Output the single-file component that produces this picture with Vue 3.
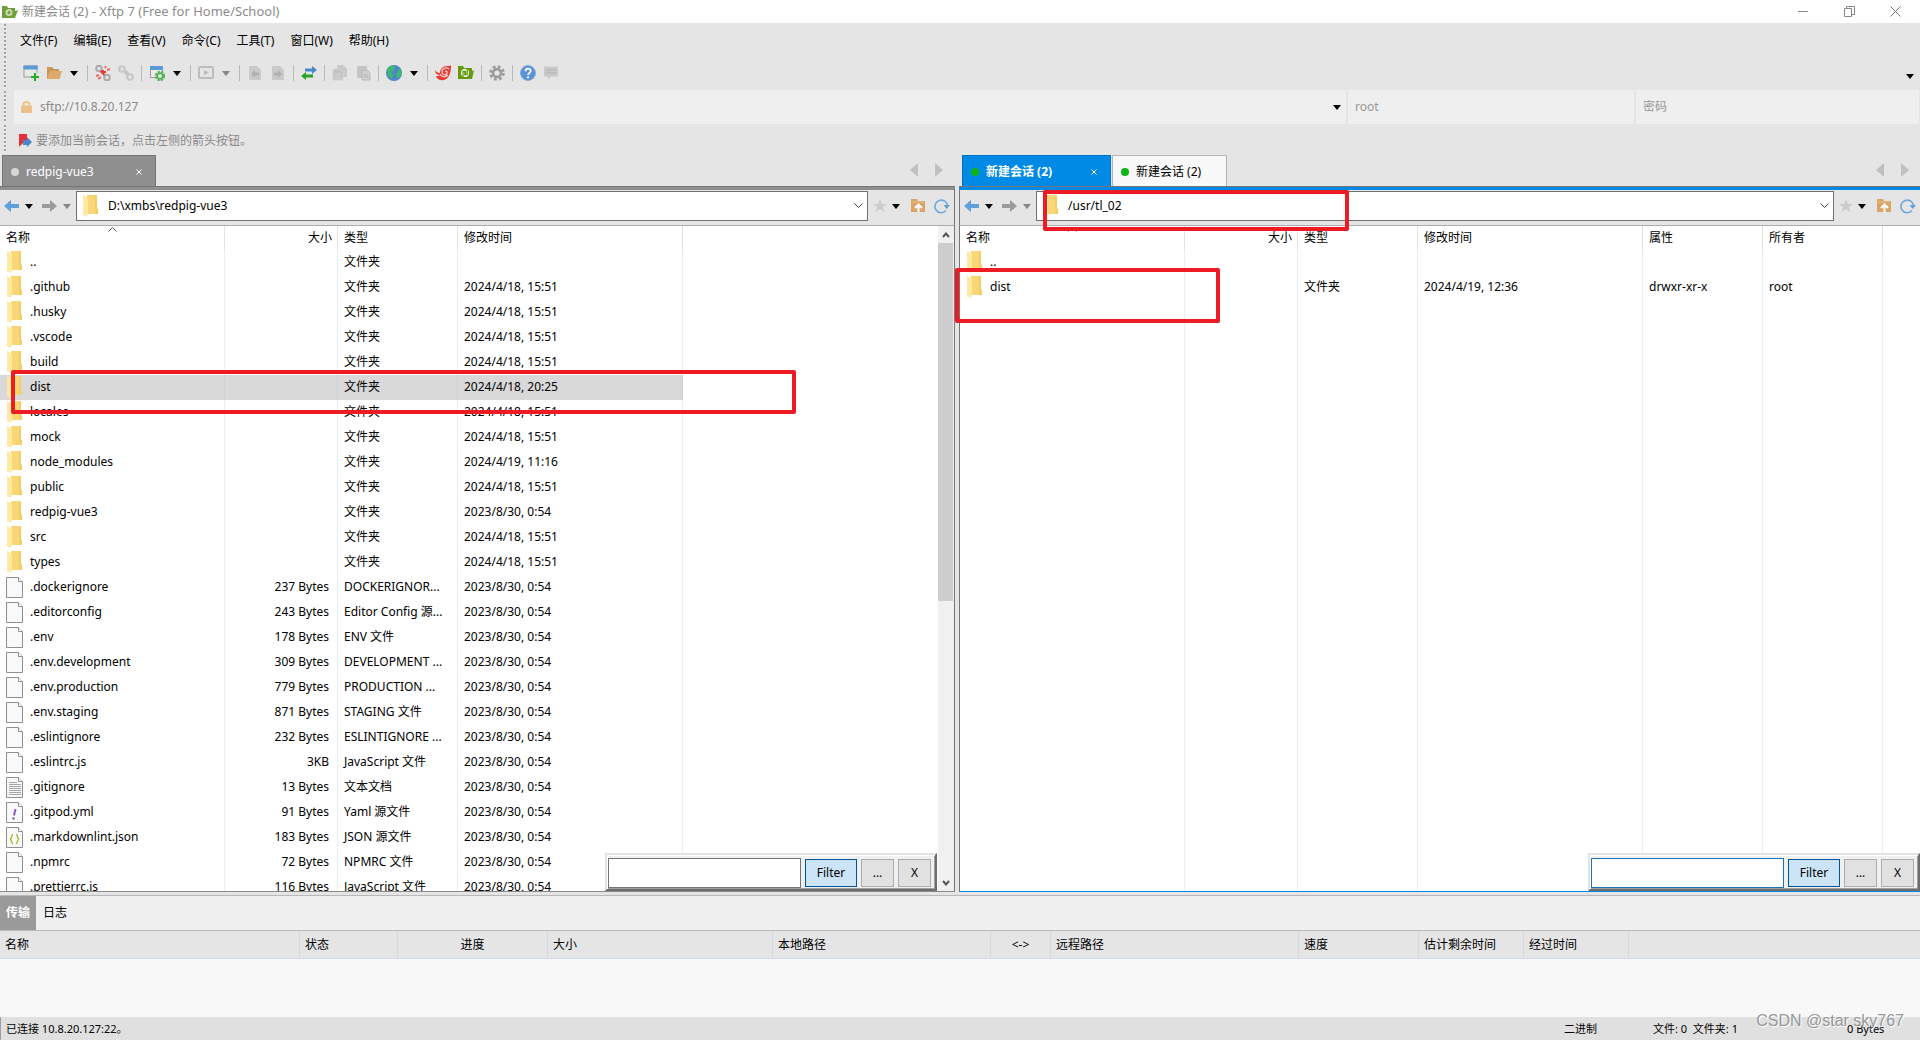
<script setup>
import { ref } from 'vue'

const host = ref('sftp://10.8.20.127')
const localPath = ref('D:\\xmbs\\redpig-vue3')
const remotePath = ref('/usr/tl_02')
const localFilter = ref('')
const remoteFilter = ref('')

const menus = ['文件(F)', '编辑(E)', '查看(V)', '命令(C)', '工具(T)', '窗口(W)', '帮助(H)']

const icons = {
  create: '<rect x="1" y="1" width="13" height="11" fill="#e9e9e9" stroke="#9c9c9c"/><rect x="0.5" y="0.5" width="14" height="4" fill="#5b9bd5"/><path d="M12.5 7.5v9M8 12h9" stroke="#e5e5e5" stroke-width="4"/><path d="M12 8v8M8 12h8" stroke="#22ac22" stroke-width="2"/>',
  open: '<path d="M1 14V2h5l2 2h5v2h2.500l-2 8z" fill="#c9975a"/><path d="M1 14l3-8h12l-3 8z" fill="#dcaa6c"/>',
  unlink: '<g fill="none" stroke="#ababab" stroke-width="2"><circle cx="4" cy="3.500" r="2.800"/><circle cx="12" cy="12.500" r="2.800"/></g><path d="M5.500 6l4 4M8 5v3M9 7h2" stroke="#e53935" stroke-width="2"/><path d="M10 3l1-2M12 5l3-1M1 11l3-1M3 14l3-2" stroke="#f06a66" stroke-width="2"/>',
  link: '<g fill="none" stroke="#c6c6c6" stroke-width="2"><circle cx="4" cy="4" r="2.800"/><circle cx="12" cy="12" r="2.800"/><path d="M6 7l4 3M7.500 6l3 2"/></g>',
  props: '<rect x="1.500" y="1.500" width="12" height="11" fill="#ececec" stroke="#9c9c9c"/><rect x="1" y="1" width="13" height="4" fill="#5b9bd5"/><circle cx="11" cy="11" r="4" fill="#ececec" stroke="#58b558" stroke-width="2.500" stroke-dasharray="2.200 1"/><circle cx="11" cy="11" r="2.700" fill="none" stroke="#4caf50" stroke-width="1.500"/>',
  play: '<rect x="1" y="2" width="14" height="11" rx="1" fill="none" stroke="#bdbdbd" stroke-width="2"/><path d="M6 5l5 2.500-5 2.500z" fill="#bdbdbd"/>',
  docLeft: '<path d="M2 1h8l4 4v10H2z" fill="#c9c9c9"/><path d="M4 9l4-4v2.500h4v3H8V13z" fill="#b0b0b0"/>',
  docRight: '<path d="M2 1h8l4 4v10H2z" fill="#c9c9c9"/><path d="M12 9L8 5v2.500H4v3h4V13z" fill="#b0b0b0"/>',
  swap: '<path d="M4 3.500h7V1l5 4-5 4V6.500H4z" fill="#4a88cc"/><path d="M12 9.500H5V7l-5 4 5 4v-2.500h7z" fill="#2aa52a"/>',
  copy: '<path d="M5 0h6l4 4v8H5z" fill="#c9c9c9"/><path d="M1 4h6l4 3v8H1z" fill="#c2c2c2" stroke="#d4d4d4"/><path d="M3 9h6M3 11h6M3 13h6" stroke="#d6d6d6"/>',
  paste: '<path d="M2 1h10v12H2z" fill="#c4c4c4"/><path d="M7 5h5l3 3v7H7z" fill="#cfcfcf" stroke="#b9b9b9"/><path d="M9 10h4M9 12h4" stroke="#b5b5b5"/>',
  globe: '<circle cx="8" cy="8" r="8" fill="#4a86c8"/><path d="M2 3c3-3 6-3 7-2L8 5 5 7l2 3-1 4C3 13 0 9 2 3zM12 4l3 1c1 3 0 5-1 7l-3 1-1-4 2-2z" fill="#3dba6d"/>',
  shell: '<path d="M0 5c1 2 3 3 5 3 0-4 3-7 7-7 2 0 3 0 4-1 0 3 0 5-1 8-1 5-5 8-9 7-3 0-4-2-5-4 1 0 3 0 4-1C2 10 0 8 0 5z" fill="#ee3a34"/><path d="M14 4c-3-2-7-1-7 3 0 3 4 4 5 1 .5-1.500-1-2.500-2-1.500M5 9c1 3 5 4 8 1" fill="none" stroke="#f5dcdb" stroke-width="1.200"/>',
  ftp: '<path d="M0 1h5l1 2h8v3l2-1-2 9H0z" fill="#659a0c"/><circle cx="7" cy="8" r="4" fill="#fff"/><path d="M5 12V6.500h1.800v4M9.200 4v5.500H7.400v-4" fill="none" stroke="#659a0c" stroke-width="1.300"/>',
  gear: '<circle cx="8" cy="8" r="6.300" fill="none" stroke="#9c9c9c" stroke-width="3" stroke-dasharray="2.700 2.250"/><circle cx="8" cy="8" r="3.900" fill="none" stroke="#9c9c9c" stroke-width="2.600"/>',
  help: '<circle cx="8" cy="8" r="7.500" fill="#5b93d4" stroke="#7fabdc"/><path d="M5.500 6.200c0-3.400 5.200-3.200 5.200-.3 0 2-2.600 1.900-2.600 4.100" fill="none" stroke="#fff" stroke-width="1.700"/><circle cx="8.100" cy="12.300" r="1.100" fill="#fff"/>',
  chat: '<path d="M1 1.500h14v10H8l-3 3.500v-3.500H1z" fill="#c9c9c9"/><path d="M3 5h10M3 8h10" stroke="#b2b2b2"/>'
}

const tools = [
  ['create', 'open', 'drop'], ['unlink', 'link'], ['props', 'drop'], ['play', 'dropOff'],
  ['docLeft', 'docRight'], ['swap'], ['copy', 'paste'], ['globe', 'drop'],
  ['shell', 'ftp'], ['gear'], ['help', 'chat']
]

const D = '文件夹'
const T = '2024/4/18, 15:51'
const F = '2023/8/30, 0:54'
const localRows = [
  ['..', '', D, '', 'dir'],
  ['.github', '', D, T, 'dir'],
  ['.husky', '', D, T, 'dir'],
  ['.vscode', '', D, T, 'dir'],
  ['build', '', D, T, 'dir'],
  ['dist', '', D, '2024/4/18, 20:25', 'dir', true],
  ['locales', '', D, T, 'dir'],
  ['mock', '', D, T, 'dir'],
  ['node_modules', '', D, '2024/4/19, 11:16', 'dir'],
  ['public', '', D, T, 'dir'],
  ['redpig-vue3', '', D, F, 'dir'],
  ['src', '', D, T, 'dir'],
  ['types', '', D, T, 'dir'],
  ['.dockerignore', '237 Bytes', 'DOCKERIGNOR...', F, 'file'],
  ['.editorconfig', '243 Bytes', 'Editor Config 源...', F, 'file'],
  ['.env', '178 Bytes', 'ENV 文件', F, 'file'],
  ['.env.development', '309 Bytes', 'DEVELOPMENT ...', F, 'file'],
  ['.env.production', '779 Bytes', 'PRODUCTION ...', F, 'file'],
  ['.env.staging', '871 Bytes', 'STAGING 文件', F, 'file'],
  ['.eslintignore', '232 Bytes', 'ESLINTIGNORE ...', F, 'file'],
  ['.eslintrc.js', '3KB', 'JavaScript 文件', F, 'file'],
  ['.gitignore', '13 Bytes', '文本文档', F, 'text'],
  ['.gitpod.yml', '91 Bytes', 'Yaml 源文件', F, 'yaml'],
  ['.markdownlint.json', '183 Bytes', 'JSON 源文件', F, 'json'],
  ['.npmrc', '72 Bytes', 'NPMRC 文件', F, 'file'],
  ['.prettierrc.js', '116 Bytes', 'JavaScript 文件', F, 'file']
]
const remoteRows = [
  ['..', '', '', '', '', ''],
  ['dist', '', D, '2024/4/19, 12:36', 'drwxr-xr-x', 'root']
]

const folder = '<path d="M5 0h10v13l1 1v5H5z" fill="#f3cd6c"/><path d="M5 0h8v19H5z" fill="#f8d775"/><path d="M1 0l5 3v14l-1 5-4-2z" fill="#ffe8a2"/>'
const sheet = '<path d="M.5 1.500h12l4 4v16H.5z" fill="#f7f9fa" stroke="#8f8f8f"/><path d="M12.500 1.500v4h4" fill="#fff" stroke="#8f8f8f"/>'
const fileIcons = {
  dir: folder,
  file: sheet,
  text: sheet + '<path d="M3 6.500h8M3 8.500h12M3 10.500h12M3 12.500h12M3 14.500h12M3 16.500h12M3 18.500h12" stroke="#a5a5a5"/>',
  yaml: sheet + '<path d="M9.500 8L8 14.500" stroke="#8e5bb5" stroke-width="2"/><circle cx="7.500" cy="17.500" r="1.200" fill="#8e5bb5"/>',
  json: sheet + '<path d="M7 8.500c-2 0-1 4-3 4.500 2 .5 1 4.500 3 4.500M10 8.500c2 0 1 4 3 4.500-2 .5-1 4.500-3 4.500" fill="none" stroke="#b5b834" stroke-width="1.500"/>'
}
const nav = {
  back: '<path d="M0 8l7-6v4h8v4H7v4z" fill="#5fa0d8"/>',
  next: '<path d="M15 8L8 2v4H0v4h8v4z" fill="#9b9b9b"/>',
  star: '<path d="M7 1l2 5h5l-4 3 1.500 5L7 11l-4.500 3L4 9 0 6h5z" fill="#cccccc"/>',
  up: '<path d="M0 1h6l1 2h7v11H0z" fill="#d8a566"/><path d="M1 4h12" stroke="#e8bf8a"/><path d="M7.500 14V8M4 10l3.500-3.500L11 10" fill="none" stroke="#fff" stroke-width="2"/>',
  refresh: '<path d="M12 12.500A6.300 6.300 0 1 1 13.500 8" fill="none" stroke="#6ea8dc" stroke-width="1.600"/><path d="M9.500 7H16l-3.200 4z" fill="#5fa0d8"/>'
}

const queue = [
  ['名称', 300], ['状态', 98], ['进度', 150, true], ['大小', 225], ['本地路径', 218],
  ['<->', 60, true], ['远程路径', 248], ['速度', 120], ['估计剩余时间', 105], ['经过时间', 105]
]
</script>

<template>
  <div class="app">
    <header class="title">
      <svg class="logo" width="16" height="16" viewBox="0 0 16 16"><path d="M0 2h5l1 2h7v3l3-1-3 8H0z" fill="#6f9f3c" /><circle cx="7" cy="8.500" r="3.500" fill="#c8dcae" /><circle cx="7" cy="8.500" r="1.500" fill="#6f9f3c" /></svg>
      <span class="caption">新建会话 <span class="latin">(2) - Xftp 7 (Free for Home/School)</span></span>
      <button class="win" aria-label="最小化"><svg width="11" height="11"><path d="M0 5.500h10" stroke="#888" /></svg></button>
      <button class="win" aria-label="还原"><svg width="11" height="11"><path d="M.5 2.500h7v8h-7zM2.500 2.500v-2h8v8h-3" fill="none" stroke="#888" /></svg></button>
      <button class="win" aria-label="关闭"><svg width="11" height="11"><path d="M.5 .5l10 10M10.500 .5l-10 10" stroke="#777" /></svg></button>
    </header>

    <nav class="menu grip">
      <button v-for="m in menus" :key="m">{{ m }}</button>
    </nav>

    <div class="tools grip">
      <div v-for="(g, i) in tools" :key="i" class="group">
        <template v-for="t in g" :key="t">
          <button v-if="t === 'drop'" class="drop" aria-label="展开"><i class="tri"></i></button>
          <button v-else-if="t === 'dropOff'" class="drop" aria-label="展开"><i class="tri off"></i></button>
          <button v-else :aria-label="t"><svg width="16" height="16" viewBox="0 0 16 16" v-html="icons[t]"></svg></button>
        </template>
      </div>
      <button class="drop more" aria-label="更多"><i class="tri"></i></button>
    </div>

    <div class="address grip">
      <label class="field host">
        <svg width="11" height="12" viewBox="0 0 11 12"><path d="M2.500 5V4a3 3 0 0 1 6 0v1" fill="none" stroke="#ebc28a" stroke-width="2" /><rect y="4.500" width="11" height="7.500" rx="1" fill="#ebc28a" /></svg>
        <input v-model="host" aria-label="主机">
        <i class="tri"></i>
      </label>
      <label class="field"><input placeholder="root" aria-label="用户名"></label>
      <label class="field"><input placeholder="密码" aria-label="密码" type="password"></label>
    </div>

    <div class="hint grip">
      <svg width="13" height="14" viewBox="0 0 13 14"><path d="M0 0h8v8l-4 1-4 4z" fill="#e03038" /><path d="M4 6h4V3l5 5-5 5v-2H4z" fill="#4a86c8" /></svg>
      <span>要添加当前会话，点击左侧的箭头按钮。</span>
    </div>

    <main class="panes">
      <section class="pane local">
        <div class="tabs">
          <div class="tab on">
            <i class="dot"></i><span>redpig-vue3</span>
            <button class="x" aria-label="关闭标签"><svg width="6" height="6"><path d="M.5 .5l5 5M5.500 .5l-5 5" stroke="#fff" /></svg></button>
          </div>
          <button class="step" aria-label="上一个"><svg width="8" height="14"><path d="M8 0v14L0 7z" fill="#c0c0c0" /></svg></button>
          <button class="step" aria-label="下一个"><svg width="8" height="14"><path d="M0 0v14l8-7z" fill="#c0c0c0" /></svg></button>
        </div>
        <div class="bar">
          <button aria-label="后退"><svg width="15" height="16" v-html="nav.back"></svg></button>
          <button class="arrow" aria-label="后退历史"><i class="tri"></i></button>
          <button aria-label="前进"><svg width="15" height="16" v-html="nav.next"></svg></button>
          <button class="arrow" aria-label="前进历史"><i class="tri off"></i></button>
          <label class="path">
            <svg width="17" height="22" v-html="folder"></svg>
            <input v-model="localPath" aria-label="本地路径">
            <svg width="9" height="6"><path d="M.5 .5l4 4 4-4" fill="none" stroke="#444" /></svg>
          </label>
          <button class="fav" aria-label="收藏"><svg width="14" height="16" v-html="nav.star"></svg></button>
          <button class="arrow" aria-label="收藏列表"><i class="tri"></i></button>
          <button class="up" aria-label="上级目录"><svg width="15" height="16" v-html="nav.up"></svg></button>
          <button aria-label="刷新"><svg width="16" height="16" v-html="nav.refresh"></svg></button>
        </div>
        <div class="listing">
          <div class="scroll">
            <table>
              <colgroup><col class="w225"><col class="w113"><col class="w120"><col class="w225"><col></colgroup>
              <thead>
                <tr><th class="name">名称<svg class="sort" width="9" height="5"><path d="M.5 4.500l4-4 4 4" fill="none" stroke="#555" /></svg></th><th class="size">大小</th><th>类型</th><th>修改时间</th><th></th></tr>
              </thead>
              <tbody>
                <tr v-for="r in localRows" :key="r[0]" :class="{ picked: r[5] }">
                  <td><span class="entry"><svg width="17" height="23" v-html="fileIcons[r[4]]"></svg>{{ r[0] }}</span></td>
                  <td class="size">{{ r[1] }}</td><td>{{ r[2] }}</td><td>{{ r[3] }}</td><td></td>
                </tr>
              </tbody>
            </table>
          </div>
          <div class="track">
            <button aria-label="向上滚动"><svg width="8" height="6"><path d="M1 5l3-3.500L7 5" fill="none" stroke="#555" stroke-width="2" /></svg></button>
            <div class="thumb"></div>
            <button aria-label="向下滚动"><svg width="8" height="6"><path d="M1 1l3 3.500L7 1" fill="none" stroke="#555" stroke-width="2" /></svg></button>
          </div>
          <form class="filter" @submit.prevent>
            <input v-model="localFilter" aria-label="本地过滤"><button class="go">Filter</button><button type="button">...</button><button type="button">X</button>
          </form>
        </div>
        <div class="mark mark-source"></div>
      </section>

      <section class="pane remote">
        <div class="tabs">
          <div class="tab on">
            <i class="dot"></i><span>新建会话 (2)</span>
            <button class="x" aria-label="关闭标签"><svg width="6" height="6"><path d="M.5 .5l5 5M5.500 .5l-5 5" stroke="#fff" /></svg></button>
          </div>
          <div class="tab idle"><i class="dot"></i><span>新建会话 (2)</span></div>
          <button class="step" aria-label="上一个"><svg width="8" height="14"><path d="M8 0v14L0 7z" fill="#c0c0c0" /></svg></button>
          <button class="step" aria-label="下一个"><svg width="8" height="14"><path d="M0 0v14l8-7z" fill="#c0c0c0" /></svg></button>
        </div>
        <div class="bar">
          <button aria-label="后退"><svg width="15" height="16" v-html="nav.back"></svg></button>
          <button class="arrow" aria-label="后退历史"><i class="tri"></i></button>
          <button aria-label="前进"><svg width="15" height="16" v-html="nav.next"></svg></button>
          <button class="arrow" aria-label="前进历史"><i class="tri off"></i></button>
          <label class="path">
            <svg width="17" height="22" v-html="folder"></svg>
            <input v-model="remotePath" aria-label="远程路径">
            <svg width="9" height="6"><path d="M.5 .5l4 4 4-4" fill="none" stroke="#444" /></svg>
          </label>
          <button class="fav" aria-label="收藏"><svg width="14" height="16" v-html="nav.star"></svg></button>
          <button class="arrow" aria-label="收藏列表"><i class="tri"></i></button>
          <button class="up" aria-label="上级目录"><svg width="15" height="16" v-html="nav.up"></svg></button>
          <button aria-label="刷新"><svg width="16" height="16" v-html="nav.refresh"></svg></button>
        </div>
        <div class="listing">
          <div class="scroll">
            <table class="fill">
              <colgroup><col class="w225"><col class="w113"><col class="w120"><col class="w225"><col class="w120"><col class="w120"><col></colgroup>
              <thead>
                <tr><th class="name">名称<svg class="sort" width="9" height="5"><path d="M.5 4.500l4-4 4 4" fill="none" stroke="#555" /></svg></th><th class="size">大小</th><th>类型</th><th>修改时间</th><th>属性</th><th>所有者</th><th></th></tr>
              </thead>
              <tbody>
                <tr v-for="r in remoteRows" :key="r[0]">
                  <td><span class="entry"><svg width="17" height="23" v-html="folder"></svg>{{ r[0] }}</span></td>
                  <td class="size">{{ r[1] }}</td><td>{{ r[2] }}</td><td>{{ r[3] }}</td><td>{{ r[4] }}</td><td>{{ r[5] }}</td><td></td>
                </tr>
                <tr class="rest"><td></td><td></td><td></td><td></td><td></td><td></td><td></td></tr>
              </tbody>
            </table>
          </div>
          <form class="filter" @submit.prevent>
            <input v-model="remoteFilter" aria-label="远程过滤"><button class="go">Filter</button><button type="button">...</button><button type="button">X</button>
          </form>
        </div>
        <div class="mark mark-path"></div>
        <div class="mark mark-target"></div>
      </section>
    </main>

    <section class="queue">
      <div class="qtabs"><button class="on">传输</button><button>日志</button></div>
      <table>
        <colgroup><col v-for="q in queue" :key="q[0]" :style="{ width: q[1] + 'px' }"><col></colgroup>
        <thead><tr><th v-for="q in queue" :key="q[0]" :class="{ mid: q[2] }">{{ q[0] }}</th><th></th></tr></thead>
      </table>
      <div class="blank"></div>
    </section>

    <footer class="status">
      <span class="conn">已连接 10.8.20.127:22。</span>
      <span class="mode">二进制</span>
      <span class="count">文件: 0&nbsp; 文件夹: 1</span>
      <span class="bytes">0 Bytes</span>
      <span class="credit">CSDN @star sky767</span>
    </footer>
  </div>
</template>

<style>
body { overflow: hidden; }
</style>

<style scoped>
.app {
  display: flex;
  flex-direction: column;
  height: 100vh;
  background: #e5e5e5;
  color: #000;
  font: 12px/16px "Noto Sans", "Noto Sans CJK SC", sans-serif;
}
.app * { box-sizing: border-box; }
button, input { font: inherit; color: inherit; border: 0; padding: 0; margin: 0; background: none; }
input { outline: 0; min-width: 0; }
svg { display: block; flex: none; }

.tri { display: block; flex: none; width: 0; height: 0; border: 4px solid transparent; border-top: 5px solid #000; border-bottom: 0; }
.tri.off { border-top-color: #848484; }

.title { display: flex; align-items: center; height: 23px; padding-right: 2px; background: #fff; color: #8b8b8b; flex: none; }
.logo { margin: 0 4px 0 2px; }
.caption { flex: 1; }
.latin { font-size: 13px; }
.win { width: 46px; height: 22px; display: grid; place-items: center; }

.grip { position: relative; flex: none; display: flex; align-items: center; }
.grip::before {
  content: "";
  position: absolute;
  left: 4px; top: 1px; bottom: 2px;
  width: 2px;
  background: repeating-linear-gradient(#a2a2a2 0 2px, #f2f2f2 2px 3px, transparent 3px 4px);
}
.menu { height: 37px; gap: 16px; padding: 0 0 2px 20px; }

.tools { height: 30px; padding: 0 6px 4px 16px; }
.group { display: flex; align-items: center; gap: 7px; padding: 0 7px; height: 16px; border-right: 1px solid #b9b9b9; }
.group:nth-last-child(2) { border-right: 0; }
.drop { width: 11px; padding-left: 1px; }
.more { margin-left: auto; padding-top: 6px; padding-left: 3px; }

.address { display: grid; grid-template-columns: 1332fr 286fr 283fr; height: 34px; gap: 2px; padding: 0 1px 0 14px; color: #8a8a8a; align-items: stretch; }
.field { display: flex; align-items: center; background: #efefef; min-width: 0; padding: 0 7px; }
.field input { flex: 1; }
.field input::placeholder { color: #999; opacity: 1; }
.host { padding-right: 5px; gap: 8px; }

.hint { height: 31px; padding-left: 19px; gap: 4px; color: #8a8a8a; padding-top: 2px; }

.panes { flex: 1; min-height: 0; display: grid; grid-template-columns: 955fr 961fr; grid-template-rows: 100%; gap: 4px; }
.pane { position: relative; display: flex; flex-direction: column; min-width: 0; --accent: #8f8f8f; --edge: #757575; }
.remote { --accent: #008ae6; --edge: #0073c4; }

.tabs { display: flex; align-items: flex-end; height: 32px; padding-left: 2px; flex: none; }
.tab { display: flex; align-items: center; height: 32px; gap: 7px; padding: 1px 13px 0 8px; border: 1px solid var(--edge); border-bottom: 0; background: var(--accent); color: #fff; }
.local .tab { width: 154px; }
.remote .tabs { padding-left: 3px; }
.remote .tab { width: 149px; font-weight: 700; }
.remote .tab.idle { width: 115px; margin-left: 1px; background: #f8f8f8; border-color: #b5b5b5; color: #000; font-weight: 400; }
.dot { width: 8px; height: 8px; border-radius: 50%; background: #d6d6d6; }
.remote .dot { background: #0db514; }
.x { margin-left: auto; }
.step { height: 24px; margin-right: 17px; padding-bottom: 10px; }
.tab + .step { margin-left: auto; }
.step:last-child { margin-right: 12px; }
.remote .step:last-child { margin-right: 11px; }

.bar { display: flex; align-items: center; height: 39px; flex: none; padding: 0 4px 3px; border-top: 3px solid var(--accent); border-right: 1px solid #757575; border-bottom: 1px solid #adadad; box-shadow: 0 -1px #757575; }
.remote .bar { border-left: 1px solid #757575; border-right: 0; }
.arrow { width: 23px; padding-left: 6px; }
.path { flex: 1; display: flex; align-items: center; height: 30px; margin-left: -4px; padding: 0 4px 0 5px; border: 1px solid #707070; background: #fff; }
.path input { flex: 1; margin-left: 9px; }
.fav { margin-left: 5px; }
.fav + .arrow { width: 24px; padding-left: 5px; }
.up { margin-right: 8px; }

.listing { position: relative; flex: 1; min-height: 0; display: flex; background: #fff; border: 0 solid #757575; border-bottom: 1px solid #8a8a8a; }
.local .listing { border-right-width: 1px; }
.remote .listing { border-left-width: 1px; border-bottom-color: #008ae6; }
.scroll { flex: 1; min-width: 0; overflow: hidden; }

table { width: 100%; table-layout: fixed; border-collapse: separate; border-spacing: 0; }
.fill { height: 100%; }
.w113 { width: 113px; }
.w120 { width: 120px; }
.w225 { width: 225px; }
th { font-weight: 400; text-align: left; white-space: nowrap; }
.listing th { position: relative; height: 24px; padding: 0 5px 0 6px; border-right: 1px solid #e2e2e2; }
.listing td { height: 25px; padding: 0 8px 1px 6px; border-right: 1px solid #e6f0fa; white-space: nowrap; }
.listing th:last-child, .listing td:last-child { border-right: 0; }
.listing .size { text-align: right; }
.listing .rest td { height: auto; }
.picked td:not(:last-child) { background: #d9d9d9; border-color: #c9d3df; }
.entry { display: flex; align-items: center; gap: 7px; height: 23px; }
.sort { position: absolute; top: 1px; left: 50%; margin-left: -4px; }

.track { width: 16px; display: flex; flex-direction: column; background: #f0f0f0; }
.track button { height: 17px; display: grid; place-items: center; }
.thumb { height: 358px; background: #cdcdcd; margin: 0 1px 0 0; }
.track button:last-child { margin-top: auto; }

.filter { position: absolute; bottom: 0; display: flex; align-items: center; gap: 4px; padding: 2px 4px 1px 1px; width: 332px; height: 38px; background: #f0f0f0; border: 2px solid; border-color: #e3e3e3 #6d6d6d #6d6d6d #e3e3e3; box-shadow: inset 1px 1px #fff, inset -1px -1px #a0a0a0; }
.local .filter { right: 17px; }
.remote .filter { right: 0; }
.filter input { flex: 1; height: 30px; border: 1px solid #757575; background: #fff; }
.remote .filter input { border-color: #1c74b8; }
.filter button { width: 33px; height: 28px; border: 1px solid #adadad; background: #e1e1e1; }
.filter .go { width: 52px; background: #cce4f7; border-color: #005499; }

.mark { position: absolute; border: 4px solid #ed1c24; border-radius: 2px; pointer-events: none; }
.mark-source { left: 11px; top: 215px; width: 785px; height: 44px; }
.mark-path { left: 84px; top: 35px; width: 306px; height: 41px; }
.mark-target { left: -4px; top: 113px; width: 265px; height: 55px; }

.queue { flex: none; margin-top: 3px; border-top: 1px solid #b8b8b8; background: #f8f8f8; }
.qtabs { display: flex; height: 35px; background: #efefef; border-bottom: 1px solid #b8b8b8; }
.qtabs button { width: 38px; }
.qtabs .on { width: 36px; background: #9a9a9a; color: #fff; font-weight: 700; }
.queue th { height: 28px; padding: 0 5px; background: #e5e5e5; border-right: 1px solid #d0d9e6; border-bottom: 1px solid #d0d9e6; }
.queue th:last-child { border-right: 0; }
.queue .mid { text-align: center; }
.blank { height: 58px; }

.status { position: relative; display: flex; align-items: center; height: 23px; flex: none; padding-left: 5px; border-left: 1px solid #9c9caa; background: #e0e0e0; font-size: 11px; white-space: nowrap; }
.conn { flex: 1; }
.mode { width: 89px; }
.count { width: 194px; }
.bytes { width: 73px; }
.credit { position: absolute; right: 16px; bottom: 9px; font: 16px/20px "Liberation Sans", sans-serif; color: rgba(140, 140, 140, .9); text-shadow: 1px 1px 1px #fff; }
</style>
